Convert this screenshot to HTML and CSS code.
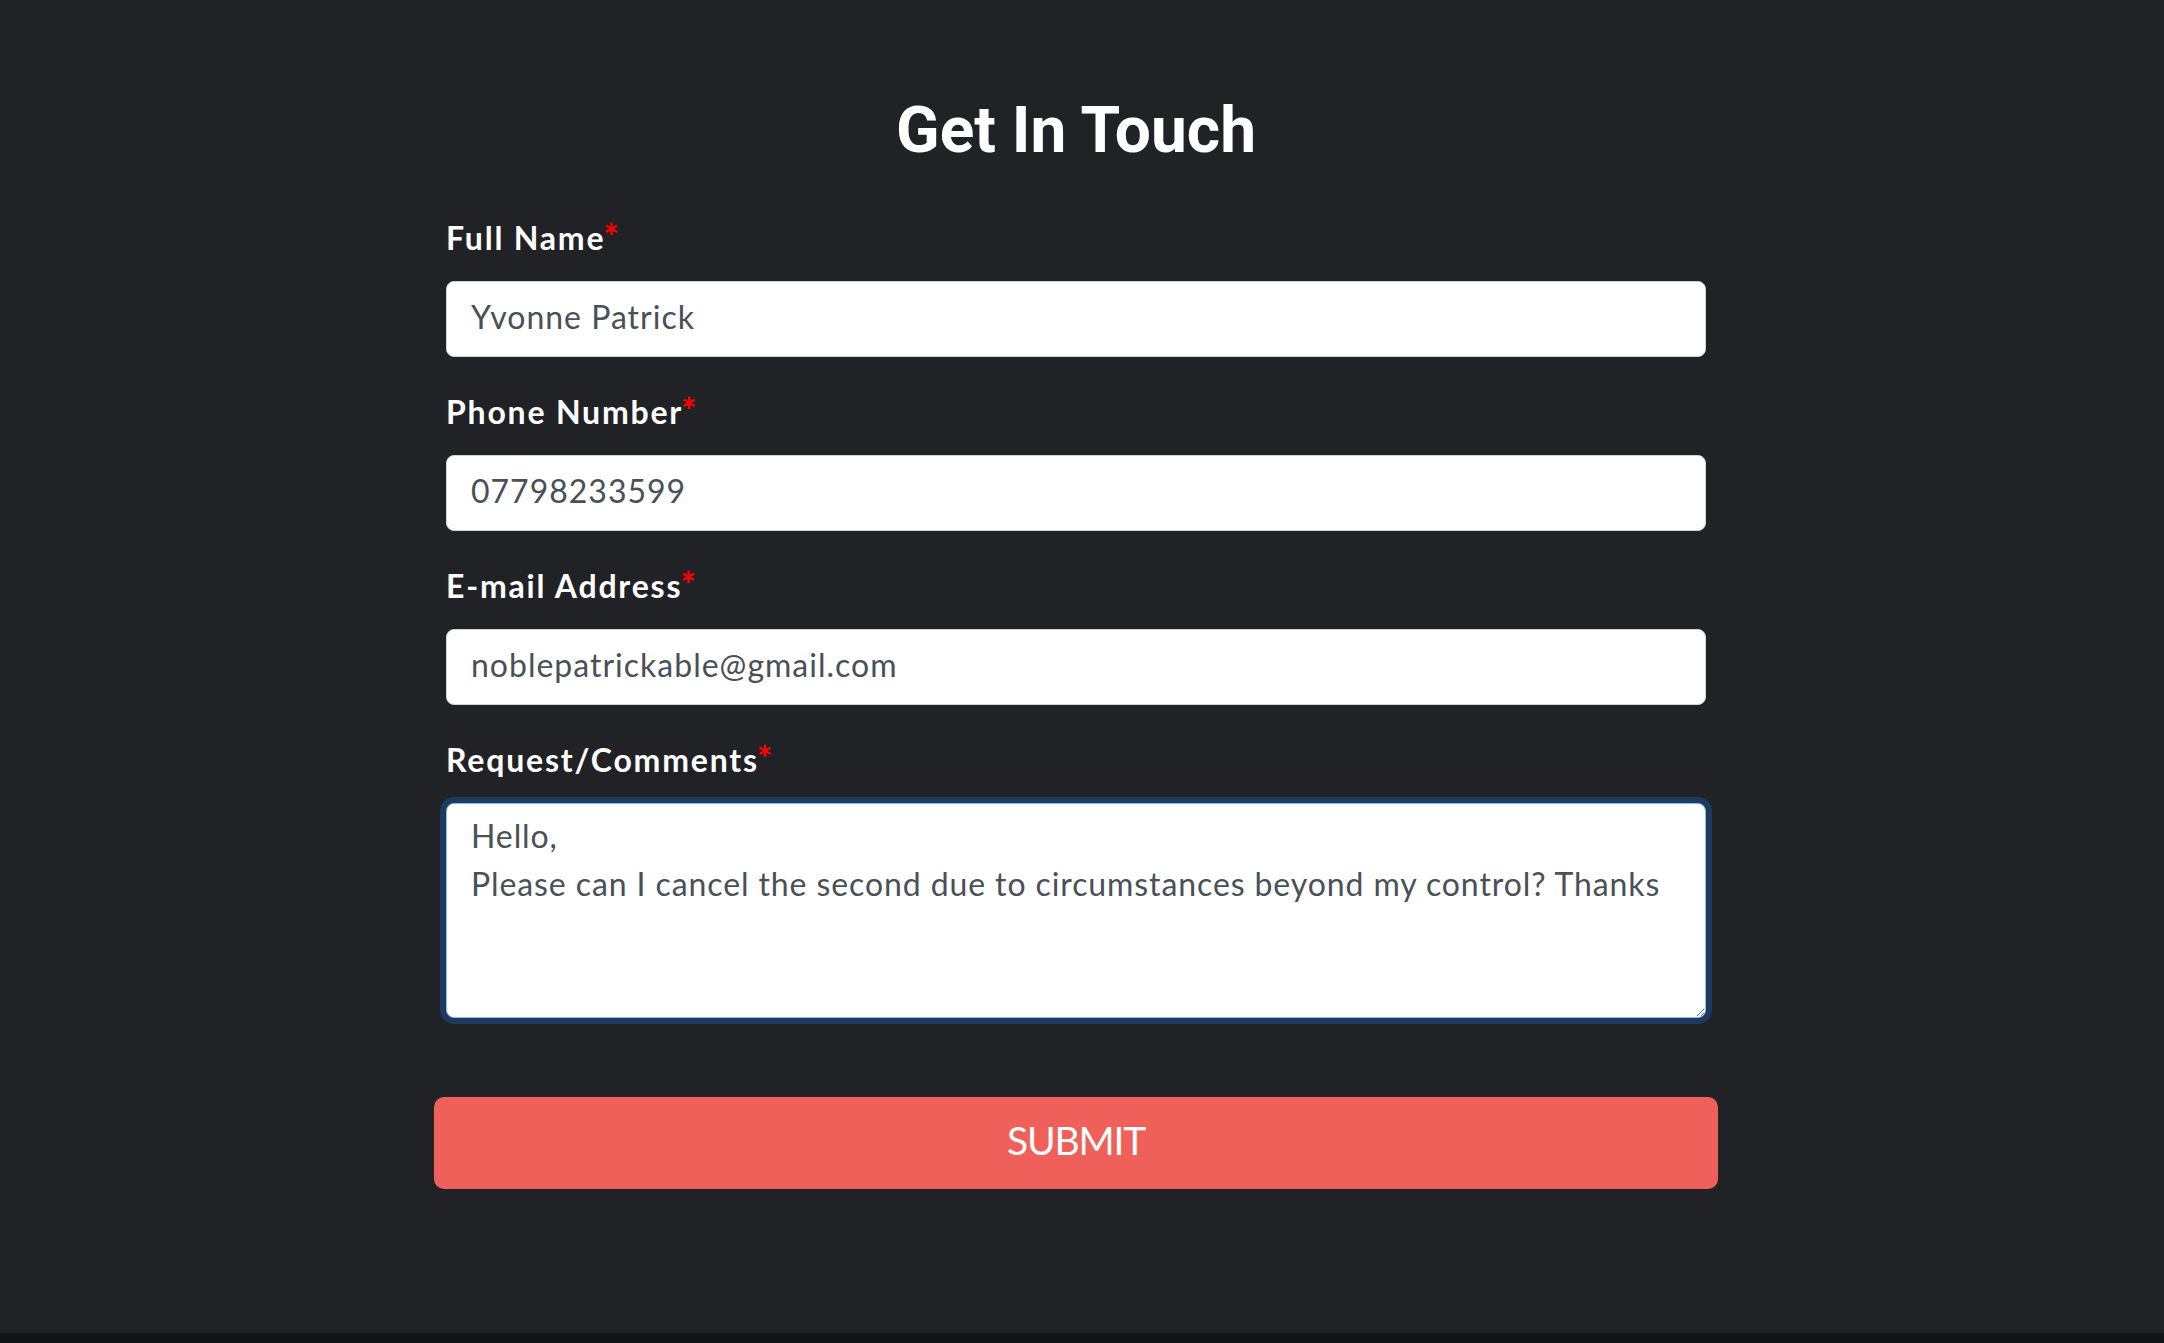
FILE: index.html
```html
<!DOCTYPE html>
<html lang="en">
<head>
<meta charset="utf-8">
<title>Get In Touch</title>
<link rel="stylesheet" href="styles.css">
</head>
<body>
<main class="page">
  <section class="contact">
    <h1 class="title">Get In Touch</h1>
    <form class="form">
      <div class="group">
        <label class="label" for="name">Full Name<span class="req">*</span></label>
        <input class="field" id="name" type="text" value="Yvonne Patrick">
      </div>
      <div class="group">
        <label class="label" for="phone">Phone Number<span class="req">*</span></label>
        <input class="field" id="phone" type="text" value="07798233599">
      </div>
      <div class="group">
        <label class="label" for="email">E-mail Address<span class="req">*</span></label>
        <input class="field" id="email" type="text" value="noblepatrickable@gmail.com">
      </div>
      <div class="group group-last">
        <label class="label" for="comments">Request/Comments<span class="req">*</span></label>
        <textarea class="field area is-focused" id="comments">Hello,
Please can I cancel the second due to circumstances beyond my control? Thanks</textarea>
      </div>
      <button class="submit" type="button">SUBMIT</button>
    </form>
  </section>
</main>
<div class="strip"></div>
</body>
</html>
```

FILE: styles.css
```css
html, body {
  margin: 0;
  padding: 0;
}

body {
  background: #121315;
  font-family: Lato, "Open Sans", sans-serif;
}

.page {
  background: #212225;
  height: 1333px;
  box-sizing: border-box;
  padding: 93px 12px 0 0;
  display: flex;
  justify-content: center;
}

.contact {
  width: 1284px;
}

.title {
  margin: 0 0 49px;
  text-align: center;
  font-family: Roboto, sans-serif;
  font-weight: 700;
  font-size: 64px;
  line-height: 1.2;
  color: #ffffff;
}

.form {
  display: flex;
  flex-direction: column;
}

.group {
  display: flex;
  flex-direction: column;
  padding: 0 12px;
  margin-bottom: 35.6px;
}

.group-last {
  margin-bottom: 79px;
}

.label {
  font-family: Lato, sans-serif;
  font-weight: 700;
  font-size: 32px;
  line-height: 1.2;
  color: #ffffff;
  letter-spacing: 1.8px;
  margin-bottom: 24px;
}

.req {
  color: #ff0000;
  font-size: 1.15em;
  line-height: 0;
  letter-spacing: 0;
  margin-left: -2px;
}

.field {
  box-sizing: border-box;
  width: 100%;
  height: 76px;
  margin: 0;
  padding: 0 24px 5px;
  border: 1px solid #ced4da;
  border-radius: 8px;
  background: #ffffff;
  color: #495057;
  font-family: Lato, sans-serif;
  font-size: 32px;
  line-height: 1.2;
  letter-spacing: 1px;
  outline: none;
}

.area {
  height: 215px;
  padding: 8px 24px;
  line-height: 48px;
  letter-spacing: 0.9px;
  resize: vertical;
}

.is-focused {
  box-shadow: 0 0 0 6px #1e3a5f;
  border-color: #86b7fe;
}

.submit {
  height: 92px;
  width: 100%;
  border: none;
  border-radius: 10px;
  background: #f0605a;
  color: #ffffff;
  font-family: Lato, sans-serif;
  font-size: 39px;
  letter-spacing: -1.2px;
  line-height: 1.2;
  padding: 0 0 6px;
  cursor: pointer;
}

.strip {
  height: 10px;
  background: #121315;
}
```
